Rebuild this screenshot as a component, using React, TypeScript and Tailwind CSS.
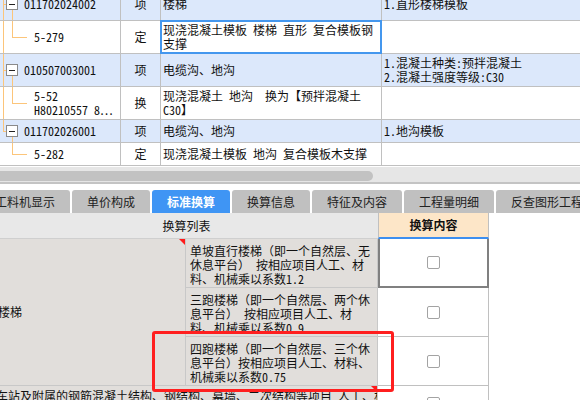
import React from 'react';

type TopRow = {
  h: string;
  blue: boolean;
  item: boolean;
  code: string[];
  parent: 'full' | 'half' | 'none';
  childDown: boolean;
  type: string;
  name: string[];
  feat: string[];
  selected?: boolean;
};

const topRows: TopRow[] = [
  { h: 'h-[33px]', blue: true, item: true, code: ['011702024002'], parent: 'full', childDown: true, type: '项', name: ['楼梯'], feat: ['1.直形楼梯模板'] },
  { h: 'h-[33px]', blue: false, item: false, code: ['5-279'], parent: 'full', childDown: false, type: '定', name: ['现浇混凝土模板 楼梯 直形 复合模板钢', '支撑'], feat: [], selected: true },
  { h: 'h-[33px]', blue: true, item: true, code: ['010507003001'], parent: 'full', childDown: true, type: '项', name: ['电缆沟、地沟'], feat: ['1.混凝土种类:预拌混凝土', '2.混凝土强度等级:C30'] },
  { h: 'h-[33px]', blue: false, item: false, code: ['5-52', 'H80210557 8…'], parent: 'full', childDown: false, type: '换', name: ['现浇混凝土 地沟  换为【预拌混凝土', 'C30】'], feat: [] },
  { h: 'h-[23px]', blue: true, item: true, code: ['011702026001'], parent: 'half', childDown: true, type: '项', name: ['电缆沟、地沟'], feat: ['1.地沟模板'] },
  { h: 'h-[23px]', blue: false, item: false, code: ['5-282'], parent: 'none', childDown: false, type: '定', name: ['现浇混凝土模板 地沟 复合模板木支撑'], feat: [] },
];

const tabs = ['工料机显示', '单价构成', '标准换算', '换算信息', '特征及内容', '工程量明细', '反查图形工程量'];

const subRows = [
  ['单坡直行楼梯（即一个自然层、无', '休息平台） 按相应项目人工、材', '料、机械乘以系数1.2'],
  ['三跑楼梯（即一个自然层、两个休', '息平台） 按相应项目人工、材', '料、机械乘以系数0.9'],
  ['四跑楼梯（即一个自然层、三个休', '息平台）按相应项目人工、材料、', '机械乘以系数0.75'],
];

function Lines({ lines }: { lines: string[] }) {
  return (
    <div>
      {lines.map((l, i) => (
        <div key={i} className="whitespace-pre">
          {l}
        </div>
      ))}
    </div>
  );
}

function CodeCell({ row }: { row: TopRow }) {
  return (
    <div className="relative w-[121px] shrink-0 h-full border-r border-[#c0c0c0] flex items-center">
      {row.parent === 'full' && <span className="absolute left-[3px] top-0 bottom-0 w-px bg-[#fcc57a]" />}
      {row.parent === 'half' && <span className="absolute left-[3px] top-0 h-1/2 w-px bg-[#fcc57a]" />}
      {row.item ? (
        <>
          <span className="absolute left-[3px] top-1/2 w-[3px] h-px bg-[#fcc57a]" />
          {row.childDown && <span className="absolute left-[12px] top-[calc(50%+6px)] bottom-0 w-px bg-[#fcc57a]" />}
          <span className="ml-[6px] w-[12px] h-[12px] shrink-0 border border-[#8a8a8a] bg-white flex items-center justify-center">
            <span className="w-[6px] h-px bg-[#222]" />
          </span>
          <span className="ml-[6px] whitespace-nowrap">{row.code[0]}</span>
        </>
      ) : (
        <>
          <span className="absolute left-[12px] top-0 h-1/2 w-px bg-[#fcc57a]" />
          <span className="absolute left-[12px] top-1/2 w-[15px] h-px bg-[#fcc57a]" />
          <div className="pl-[34px]">
            <Lines lines={row.code} />
          </div>
        </>
      )}
    </div>
  );
}

function Checkbox() {
  return <span className="block w-[13px] h-[13px] rounded-[2px] border border-[#a3a3a3] bg-white" />;
}

function Corner() {
  return (
    <svg className="absolute right-0 top-0" width="6" height="6" viewBox="0 0 6 6">
      <polygon points="0,0 6,0 6,6" fill="#ff1a1a" />
    </svg>
  );
}

export default function App() {
  return (
    <div className="relative w-[580px] h-[400px] overflow-hidden bg-white text-[12px] leading-[14px] text-[#111] font-['Noto_Sans_Mono_CJK_SC','Noto_Sans_CJK_SC',sans-serif]">
      {/* top grid */}
      <div className="h-[167px] overflow-hidden">
        <div className="-mt-[12px]">
          {topRows.map((r, i) => (
            <div
              key={i}
              className={`${r.h} flex border-b border-[#c0c0c0] ${r.blue ? 'bg-[#dce8fb]' : 'bg-white'}`}
            >
              <CodeCell row={r} />
              <div className="w-[40px] shrink-0 border-r border-[#c0c0c0] flex items-center justify-center">{r.type}</div>
              <div className="relative w-[221px] shrink-0 border-r border-[#c0c0c0] flex items-center px-[2px]">
                <Lines lines={r.name} />
                {r.selected && <span className="absolute -left-px -top-px -right-px -bottom-px border-2 border-[#4497ee]" />}
              </div>
              <div className="flex-1 flex items-center px-[2px]">
                <Lines lines={r.feat} />
              </div>
            </div>
          ))}
        </div>
      </div>

      {/* horizontal scrollbar */}
      <div className="h-[15px] bg-[#e6e6e6] pt-[4px]">
        <div className="w-[373px] h-[10px] rounded-r-[5px] bg-[#c2c2c2]" />
      </div>
      <div className="h-[2px] bg-[#c4c4c4]" />
      <div className="h-[6px]" />

      {/* tabs */}
      <div className="h-[23px] flex gap-[2px] -ml-[20px]">
        {tabs.map((t) => (
          <div
            key={t}
            className={`shrink-0 px-[15px] rounded-t-[3px] flex items-center ${
              t === '标准换算' ? 'bg-[#3f95f4] text-white font-bold' : 'bg-[#c0c0c0] text-[#222]'
            }`}
          >
            {t}
          </div>
        ))}
      </div>

      {/* list header */}
      <div className="h-[26px] flex">
        <div className="w-[378px] bg-[#e8e8e8] border-b border-[#cfcfcf] flex items-center justify-center pr-[5px]">换算列表</div>
        <div className="w-[111px] bg-[#fde6c8] border-l border-r border-[#c0c0c0] border-b-2 border-b-[#3d8ff0] flex items-center justify-center font-bold">
          换算内容
        </div>
      </div>

      {/* list body */}
      <div className="flex h-[147px]">
        <div className="relative w-[186px] shrink-0 bg-[#e1dedb] border-r border-b border-[#c8c8c8] flex items-center">
          <span className="-ml-[2px]">楼梯</span>
          <Corner />
        </div>
        <div className="w-[192px] shrink-0">
          {subRows.map((s, i) => (
            <div key={i} className="h-[49px] overflow-hidden bg-[#e1dedb] border-r border-b border-[#c8c8c8] pl-[4px] pt-[5px]">
              <Lines lines={s} />
            </div>
          ))}
        </div>
        <div className="w-[111px] shrink-0">
          {subRows.map((_, i) => (
            <div
              key={i}
              className={`h-[49px] bg-white flex items-center justify-center ${
                i === 0 ? 'border-l-2 border-r-2 border-b-2 border-[#808080]' : 'border-r border-b border-[#c0c0c0]'
              }`}
            >
              <Checkbox />
            </div>
          ))}
        </div>
      </div>

      {/* next row (clipped) */}
      <div className="flex h-[30px]">
        <div className="relative w-[378px] shrink-0 bg-[#e1dedb] border-r border-[#c8c8c8] overflow-hidden pt-[3px]">
          <div className="whitespace-nowrap -ml-[4px]">车站及附属的钢筋混凝土结构、钢结构、幕墙、二次结构等项目 人工、材料</div>
          <Corner />
        </div>
        <div className="w-[111px] shrink-0 border-r border-[#c0c0c0] flex justify-center pt-[11px]">
          <Checkbox />
        </div>
      </div>

      {/* highlight annotation */}
      <div className="absolute left-[152px] top-[331px] w-[242px] h-[61px] border-[3px] border-[#ff1f1f] rounded-[3px]" />
    </div>
  );
}
